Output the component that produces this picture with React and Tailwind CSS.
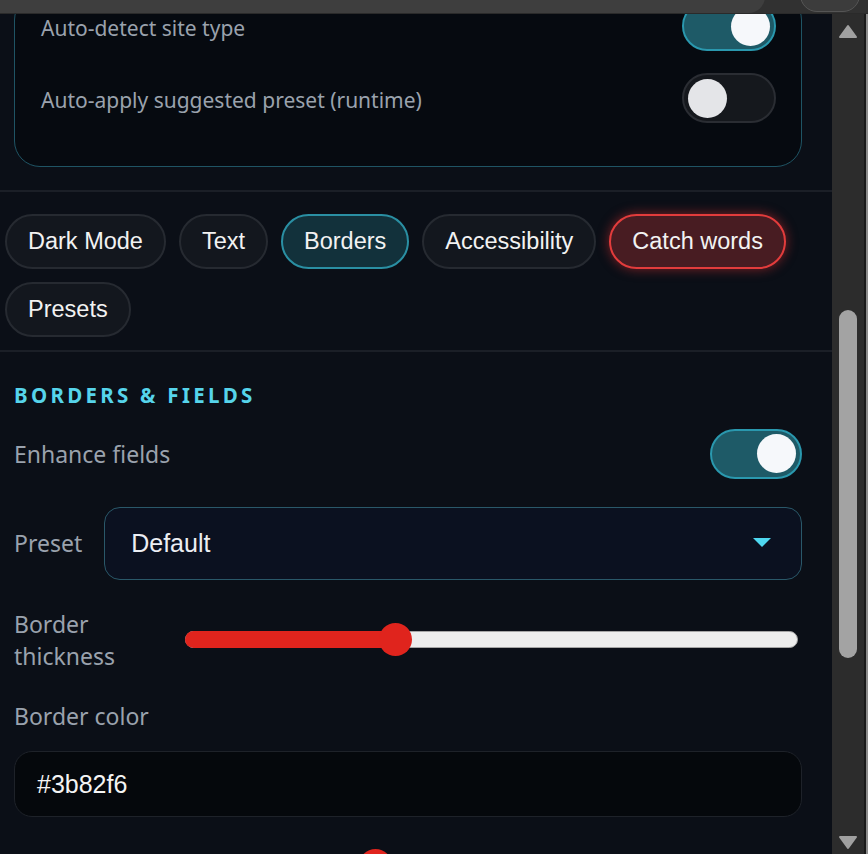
import React from "react";

const sans = { fontFamily: '"Noto Sans", "Open Sans", sans-serif' };
const arial = { fontFamily: '"Liberation Sans", Arial, sans-serif' };

function Toggle({ on, w = "w-[94px]" }) {
  return on ? (
    <div className={`flex h-[50px] ${w} shrink-0 items-center justify-end rounded-full border-2 border-[#2a98ae] bg-[#1e5a67] pr-[4px]`}>
      <div className="h-[39px] w-[39px] rounded-full bg-[#f6f8fb]" />
    </div>
  ) : (
    <div className={`flex h-[50px] ${w} shrink-0 items-center justify-start rounded-full border-2 border-[#2a2d33] bg-[#15181d] pl-[4px]`}>
      <div className="h-[39px] w-[39px] rounded-full bg-[#e4e5e8]" />
    </div>
  );
}

function Pill({ children, variant }) {
  const base =
    "flex h-[55px] items-center rounded-full border-2 px-[21px] text-[23.5px] text-[#f2f2f2]";
  const cls =
    variant === "active"
      ? "border-[#2a8fa3] bg-[#12313b]"
      : variant === "red"
      ? "border-[#e23c3c] bg-[#481c22] shadow-[0_0_12px_rgba(226,50,50,0.55)]"
      : "border-[#262a31] bg-[#13171e]";
  return (
    <div className={`${base} ${cls}`} style={arial}>
      {children}
    </div>
  );
}

export default function App() {
  return (
    <div className="flex h-[854px] w-[868px] flex-col overflow-hidden bg-[#0b0f17]">
      {/* top chrome strip */}
      <div className="relative h-[14px] shrink-0 overflow-hidden border-b border-[#2a2a2a] bg-[#313131]">
        <div className="absolute left-0 top-[-20px] h-[33px] w-[765px] rounded-r-full bg-[#3e3e3e]" />
        <div className="absolute left-[800px] top-[-22px] h-[34px] w-[60px] rounded-full border border-[#555] bg-[#3c3c3c]" />
      </div>

      <div className="flex min-h-0 flex-1">
        <main className="min-w-0 flex-1 overflow-hidden">
          {/* cut card */}
          <div className="pl-[14px] pr-[30px]">
            <div className="-mt-[20px] rounded-[26px] border-[1.5px] border-[#1f5464] bg-[#060a10] pl-[26px] pr-[25px] pb-[43px] pt-[6px]">
              <div className="flex items-center justify-between">
                <span className="pt-[6px] text-[21px] text-[#9aa2ad]" style={sans}>
                  Auto-detect site type
                </span>
                <Toggle on />
              </div>
              <div className="mt-[22px] flex items-center justify-between">
                <span className="pt-[6px] text-[21px] text-[#9aa2ad]" style={sans}>
                  Auto-apply suggested preset (runtime)
                </span>
                <Toggle />
              </div>
            </div>
          </div>

          <div className="mt-[23px] h-[2px] bg-[#1b1f27]" />

          {/* tabs */}
          <div className="flex flex-wrap gap-x-[13px] gap-y-[13px] px-[5px] pb-[13px] pt-[22px]">
            <Pill>Dark Mode</Pill>
            <Pill>Text</Pill>
            <Pill variant="active">Borders</Pill>
            <Pill>Accessibility</Pill>
            <Pill variant="red">Catch words</Pill>
            <Pill>Presets</Pill>
          </div>

          <div className="h-[2px] bg-[#1b1f27]" />

          {/* section */}
          <div className="pl-[14px] pr-[30px] pt-[28px]">
            <div
              className="text-[20.5px] font-bold tracking-[0.16em] text-[#56d4eb]"
              style={sans}
            >
              BORDERS &amp; FIELDS
            </div>

            <div className="mt-[18px] flex items-center justify-between">
              <span className="text-[23px] text-[#9aa2ad]" style={sans}>
                Enhance fields
              </span>
              <Toggle on w="w-[92px]" />
            </div>

            <div className="mt-[28px] flex items-center gap-[22px]">
              <span className="text-[23px] text-[#9aa2ad]" style={sans}>
                Preset
              </span>
              <div className="flex h-[73px] flex-1 items-center justify-between rounded-[16px] border-[1.5px] border-[#2a5869] bg-[#0b1120] pl-[26px] pr-[30px]">
                <span className="text-[25px] text-[#eceef3]" style={arial}>
                  Default
                </span>
                <svg width="18" height="10" viewBox="0 0 18 10">
                  <path d="M0 0 H18 L9 9 Z" fill="#4fd8f0" />
                </svg>
              </div>
            </div>

            <div className="mt-[28px] flex items-start">
              <div
                className="w-[140px] text-[23px] leading-[32px] text-[#9aa2ad]"
                style={sans}
              >
                Border
                <br />
                thickness
              </div>
              <div className="ml-[31px] mr-[4px] mt-[6px] flex h-[52px] flex-1 items-center">
                <div className="relative h-[17px] w-full rounded-full border border-[#a5a5a5] bg-[#ededed]">
                  <div className="absolute left-[-1px] top-[-1px] h-[17px] w-[210px] rounded-l-full bg-[#e0241d]" />
                  <div className="absolute left-[193px] top-[-9px] h-[33px] w-[33px] rounded-full bg-[#e0241d]" />
                </div>
              </div>
            </div>

            <div className="mt-[27px] text-[23px] text-[#9aa2ad]" style={sans}>
              Border color
            </div>

            <div className="mt-[18px] flex h-[66px] items-center rounded-[18px] border-[1.5px] border-[#1e2229] bg-[#05080c] px-[22px]">
              <span className="text-[25px] text-[#f4f4f4]" style={arial}>
                #3b82f6
              </span>
            </div>

            <div className="mt-[32px] flex">
              <div className="ml-[345px] h-[33px] w-[33px] rounded-full bg-[#e0241d]" />
            </div>
          </div>
        </main>

        {/* scrollbar */}
        <div className="flex w-[32px] shrink-0 flex-col items-center bg-[#2c2c2c]">
          <svg width="20" height="16" viewBox="0 0 20 16" className="mt-[10px]">
            <path d="M10 2 L18 13 H2 Z" fill="#a0a0a0" stroke="#a0a0a0" strokeWidth="2" strokeLinejoin="round" />
          </svg>
          <div className="mt-[270px] h-[348px] w-[18px] rounded-[9px] bg-[#a3a3a3]" />
          <div className="flex-1" />
          <svg width="20" height="16" viewBox="0 0 20 16" className="mb-[4px]">
            <path d="M2 3 H18 L10 14 Z" fill="#a0a0a0" stroke="#a0a0a0" strokeWidth="2" strokeLinejoin="round" />
          </svg>
        </div>
        <div className="flex w-[4px] shrink-0">
          <div className="w-[2px] bg-[#1a1a1a]" />
          <div className="w-[2px] bg-[#8c8c8c]" />
        </div>
      </div>
    </div>
  );
}
